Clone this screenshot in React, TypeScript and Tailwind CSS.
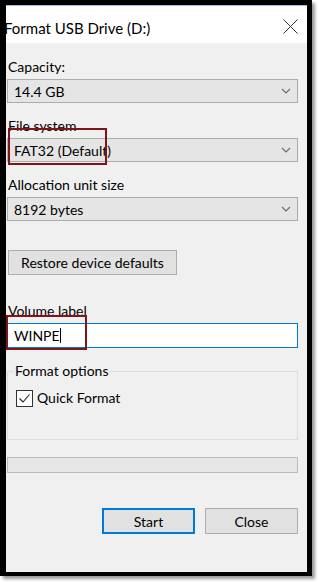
function Chevron() {
  return (
    <svg width="10" height="6" viewBox="0 0 10 6" className="shrink-0">
      <path d="M1 1 L5 5 L9 1" fill="none" stroke="#6b6b6b" strokeWidth="1.1" />
    </svg>
  );
}

function Combo({ value }: { value: string }) {
  return (
    <div className="mt-[2px] h-[24px] w-[291px] flex items-center justify-between pl-[6px] pr-[6px] bg-[#e5e5e5] border border-[#acacac] text-[14px] text-black">
      <span>{value}</span>
      <Chevron />
    </div>
  );
}

function Label({ text, className = '' }: { text: string; className?: string }) {
  return <div className={`ml-[1px] h-[20px] leading-[20px] text-[14px] text-black ${className}`}>{text}</div>;
}

export default function App() {
  return (
    <div className="w-[320px] h-[582px] bg-white overflow-hidden font-['Lato','Liberation_Sans',sans-serif]">
      <div className="w-[312px] h-[576px] border-black border-l-[6px] border-t-[5px] border-r-[5px] border-b-[4px] shadow-[3px_3px_3px_rgba(0,0,0,0.4)] flex flex-col bg-[#f0f0f0]">
        {/* title bar */}
        <div className="h-[38px] shrink-0 bg-white border-t border-[#9dbde6] flex items-start justify-between">
          <span className="-ml-[2px] mt-[13px] leading-[18px] text-[15px] text-black whitespace-nowrap">Format USB Drive (D:)</span>
          <svg width="15" height="15" viewBox="0 0 15 15" className="mt-[13px] mr-[9px]">
            <path d="M0.5 0.5 L14.5 14.5 M14.5 0.5 L0.5 14.5" stroke="#333" strokeWidth="1" />
          </svg>
        </div>

        <div className="flex flex-col pl-[1px]">
          <Label text="Capacity:" className="mt-[14px]" />
          <Combo value="14.4 GB" />

          <div className="relative mt-[13px]">
            <Label text="File system" />
            <Combo value="FAT32 (Default)" />
            <div className="absolute left-[1px] top-[12px] w-[99px] h-[37px] border-[2.5px] border-[#7e1518]" />
          </div>

          <Label text="Allocation unit size" className="mt-[13px]" />
          <Combo value="8192 bytes" />

          <button className="mt-[29px] ml-[1px] h-[25px] w-[169px] bg-[#e1e1e1] border border-[#adadad] text-[14px] text-black">
            Restore device defaults
          </button>

          <div className="relative mt-[26px]">
            <Label text="Volume label" />
            <div className="mt-[2px] h-[25px] w-[291px] bg-white border border-[#0078d7] flex items-center pl-[6px] text-[14px] text-black">
              <span>WINPE</span>
              <span className="w-px h-[15px] bg-black" />
            </div>
            <div className="absolute -left-[1px] top-[14px] w-[81px] h-[35px] border-[2.5px] border-[#7e1518]" />
          </div>

          <fieldset className="mt-[14px] w-[291px] h-[78px] border border-[#dcdcdc] pl-[6px]">
            <legend className="px-[1px] text-[14px] leading-[18px] text-black">Format options</legend>
            <div className="mt-[8px] ml-[2px] flex items-center gap-[4px]">
              <div className="w-[17px] h-[17px] bg-white border border-[#333] flex items-center justify-center">
                <svg width="13" height="13" viewBox="0 0 13 13">
                  <path d="M1.5 6.5 L5 10 L11.5 2.5" fill="none" stroke="#222" strokeWidth="1.1" />
                </svg>
              </div>
              <span className="text-[14px] leading-[20px] text-black">Quick Format</span>
            </div>
          </fieldset>

          <div className="mt-[17px] h-[16px] w-[291px] bg-[#e6e6e6] border border-[#bcbcbc]" />

          <div className="mt-[35px] w-[291px] flex justify-end gap-[10px]">
            <button className="h-[26px] w-[93px] bg-[#e1e1e1] border-2 border-[#0078d7] text-[14px] text-black">Start</button>
            <button className="h-[26px] w-[93px] bg-[#e1e1e1] border border-[#adadad] text-[14px] text-black">Close</button>
          </div>
        </div>
      </div>
    </div>
  );
}
